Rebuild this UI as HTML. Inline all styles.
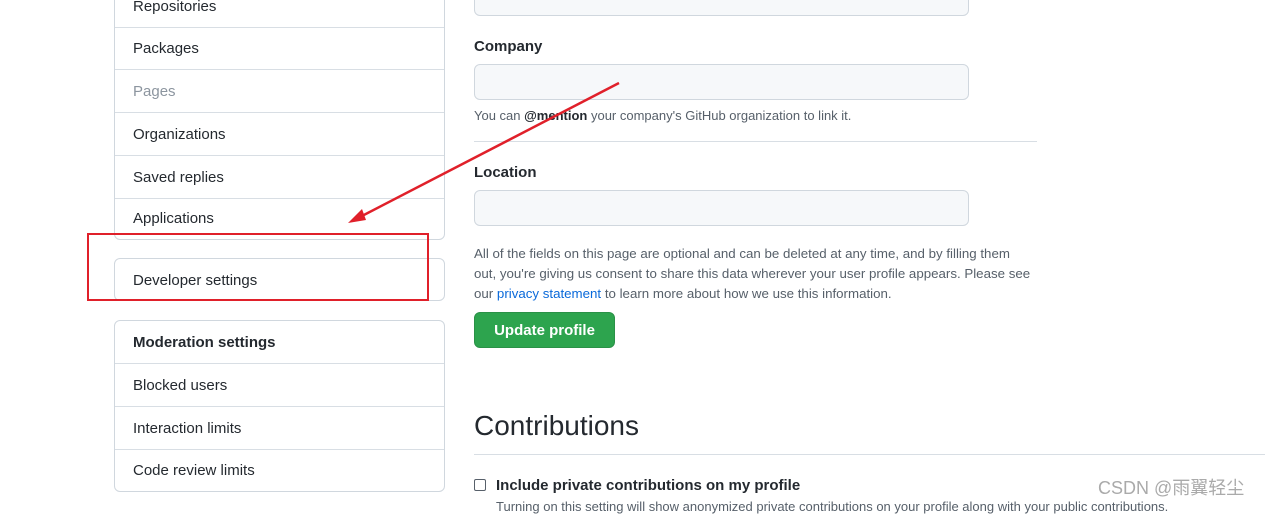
<!DOCTYPE html>
<html><head><meta charset="utf-8"><style>
body{margin:0;width:1265px;height:504px;overflow:hidden;background:#fff;font-family:"Liberation Sans",Arial,sans-serif;color:#24292f;position:relative}
.box{position:absolute;left:114px;width:331px;border:1px solid #d0d7de;border-radius:6px;box-sizing:border-box}
.row{position:absolute;left:0;right:0;border-bottom:1px solid #d8dee4;font-size:15px;padding-left:18px;box-sizing:border-box}
.a{position:absolute;font-size:14px}
.inp{position:absolute;left:474px;width:495px;height:36px;background:#f6f8fa;border:1px solid #d0d7de;border-radius:6px;box-sizing:border-box}
</style></head><body>
<div class="box" style="top:-10px;height:250px;border-top-left-radius:0;border-top-right-radius:0">
<div class="row" style="top:0;height:37px;line-height:32px">Repositories</div>
<div class="row" style="top:37px;height:42px;line-height:42px">Packages</div>
<div class="row" style="top:79px;height:43px;line-height:43px;color:#8c959f">Pages</div>
<div class="row" style="top:122px;height:43px;line-height:43px">Organizations</div>
<div class="row" style="top:165px;height:43px;line-height:43px">Saved replies</div>
<div class="row" style="top:208px;height:41px;line-height:40px;border:none">Applications</div>
</div>
<div class="box" style="top:258px;height:43px"><div class="row" style="top:0;height:41px;line-height:44px;border:none">Developer settings</div></div>
<div class="box" style="top:320px;height:172px">
<div class="row" style="top:0;height:43px;line-height:43px;font-weight:bold">Moderation settings</div>
<div class="row" style="top:43px;height:43px;line-height:43px">Blocked users</div>
<div class="row" style="top:86px;height:43px;line-height:43px">Interaction limits</div>
<div class="row" style="top:129px;height:41px;line-height:42px;border:none">Code review limits</div>
</div>
<div class="inp" style="top:-20px"></div>
<div class="a" style="left:474px;top:38px;font-weight:bold;font-size:15px">Company</div>
<div class="inp" style="top:64px"></div>
<div class="a" style="left:474px;top:108px;font-size:13px;color:#57606a">You can <b style="color:#24292f">@mention</b> your company's GitHub organization to link it.</div>
<div style="position:absolute;left:474px;top:141px;width:563px;border-top:1px solid #d8dee4"></div>
<div class="a" style="left:474px;top:164px;font-weight:bold;font-size:15px">Location</div>
<div class="inp" style="top:190px"></div>
<div class="a" style="left:474px;top:244px;white-space:nowrap;font-size:13.3px;line-height:20px;color:#57606a">All of the fields on this page are optional and can be deleted at any time, and by filling them<br>out, you're giving us consent to share this data wherever your user profile appears. Please see<br>our <span style="color:#0969da">privacy statement</span> to learn more about how we use this information.</div>
<div style="position:absolute;left:474px;top:312px;width:141px;height:36px;background:#2da44e;border:1px solid #2a9147;border-radius:6px;box-sizing:border-box;color:#fff;font-weight:bold;font-size:15px;line-height:36px;text-align:center">Update profile</div>
<div class="a" style="left:474px;top:410px;font-size:28px">Contributions</div>
<div style="position:absolute;left:474px;top:454px;width:791px;border-top:1px solid #d8dee4"></div>
<div style="position:absolute;left:474px;top:479px;width:12px;height:12px;border:1px solid #57606a;border-radius:2px;box-sizing:border-box"></div>
<div class="a" style="left:496px;top:477px;font-weight:bold;font-size:15px">Include private contributions on my profile</div>
<div class="a" style="left:496px;top:499px;font-size:13px;color:#57606a">Turning on this setting will show anonymized private contributions on your profile along with your public contributions.</div>
<div class="a" style="left:1098px;top:474px;font-size:18px;color:#aaa;font-family:'Liberation Sans','Noto Sans CJK SC',sans-serif">CSDN @雨翼轻尘</div>
<div style="position:absolute;left:87px;top:233px;width:342px;height:68px;border:2px solid #e0202a;box-sizing:border-box"></div>
<svg style="position:absolute;left:0;top:0" width="1265" height="504"><line x1="619" y1="83" x2="360" y2="217" stroke="#e0202a" stroke-width="2.5"/><polygon points="348,223 362,209 366,220" fill="#e0202a"/></svg>
</body></html>
